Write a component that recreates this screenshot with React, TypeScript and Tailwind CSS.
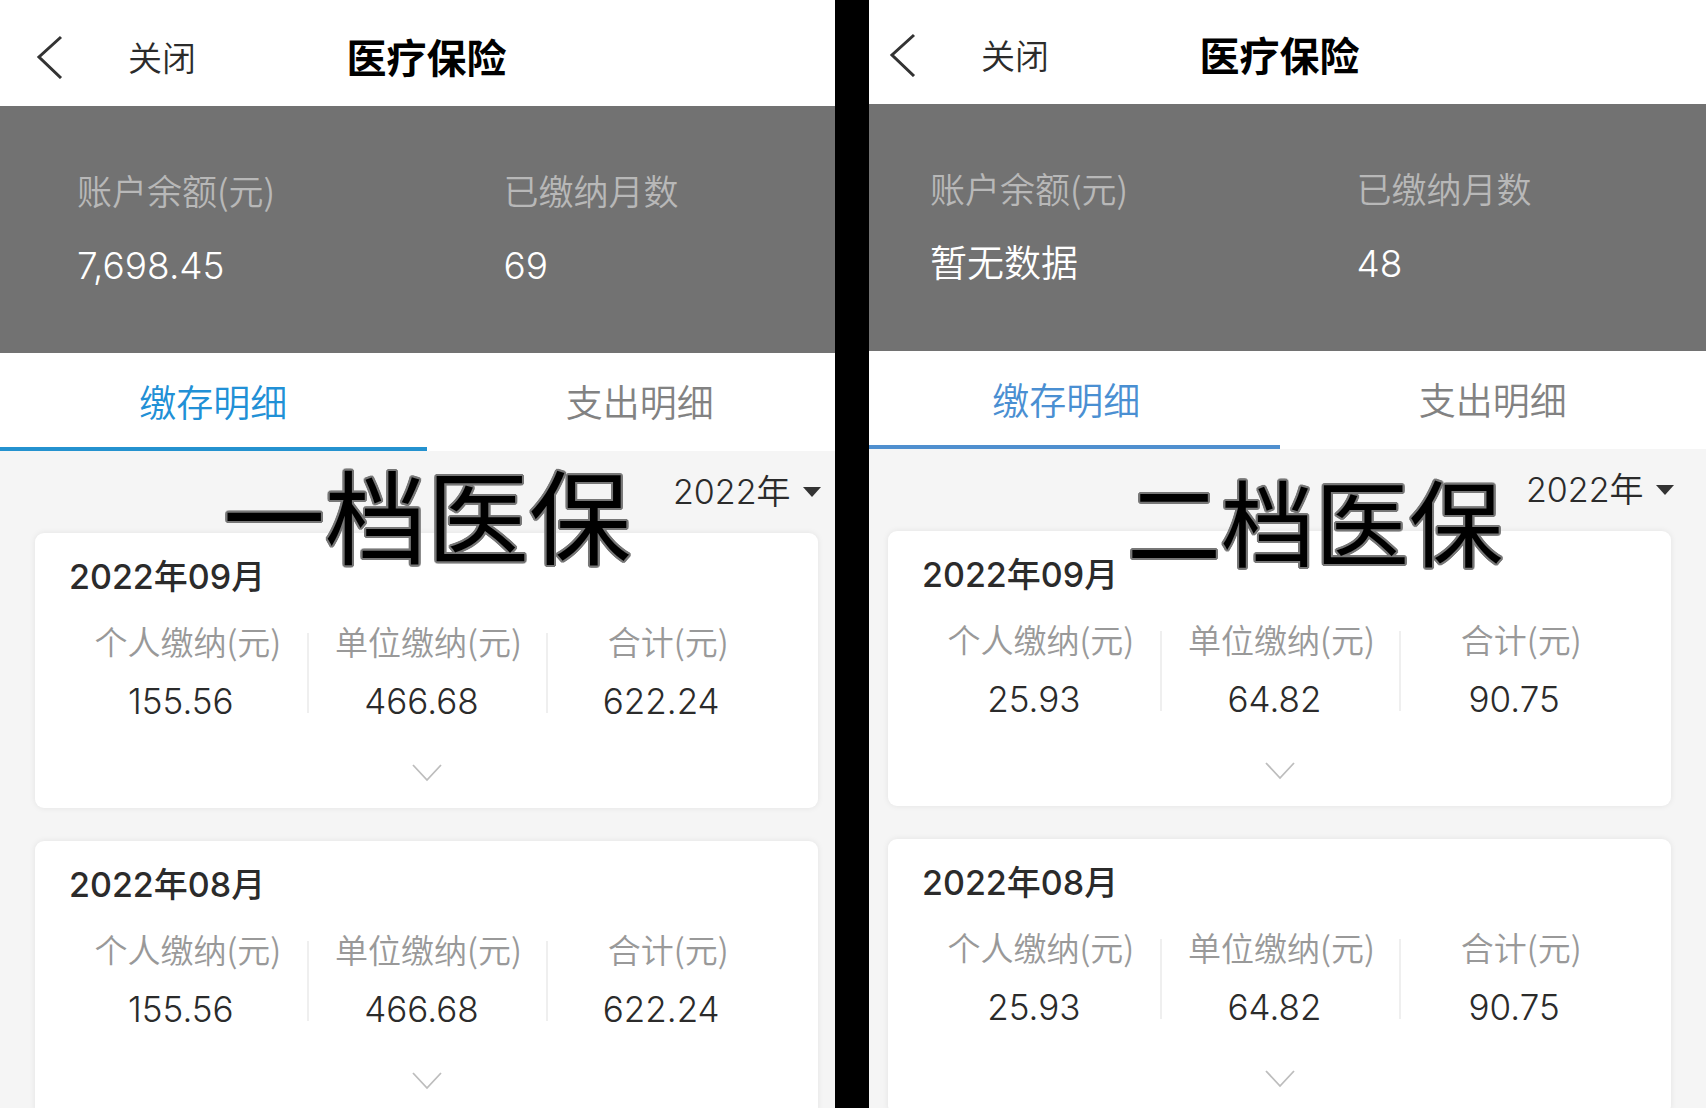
import React from 'react';

type Bill = { month: string; personal: string; company: string; total: string };

type Account = {
  id: string;
  balance: string;
  months: string;
  bills: Bill[];
  headerClass: string;
  activeTabClass: string;
  caption: string;
  captionClass: string;
};

const accounts: Account[] = [
  {
    id: 'first',
    balance: '7,698.45',
    months: '69',
    bills: [
      { month: '2022年09月', personal: '155.56', company: '466.68', total: '622.24' },
      { month: '2022年08月', personal: '155.56', company: '466.68', total: '622.24' },
    ],
    headerClass: 'h-[106px] pt-2',
    activeTabClass: 'border-[#2492cf] text-[#2190d6]',
    caption: '一档医保',
    captionClass: 'left-[223px] top-[469px] text-[102px]',
  },
  {
    id: 'second',
    balance: '暂无数据',
    months: '48',
    bills: [
      { month: '2022年09月', personal: '25.93', company: '64.82', total: '90.75' },
      { month: '2022年08月', personal: '25.93', company: '64.82', total: '90.75' },
    ],
    headerClass: 'h-[104px] pt-1.5',
    activeTabClass: 'border-[#4f8fcf] text-[#4a8fd2]',
    caption: '二档医保',
    captionClass: 'left-[274px] top-[479px] text-[94px]',
  },
];

function BackIcon() {
  return (
    <svg className="h-11 w-7" viewBox="0 0 28 44" fill="none" stroke="#333" strokeWidth="3" aria-hidden="true">
      <path d="M25 2 3 22l22 21" />
    </svg>
  );
}

function Figure({ label, value }: { label: string; value: string }) {
  return (
    <div className="flex h-20 flex-col items-center justify-between border-l-2 border-[#efefef] first:border-l-0">
      <dt className="-mt-3 pl-0.5 font-['Noto_Sans_CJK_SC',sans-serif] text-[33px] leading-10 font-[350] text-[#999]">
        {label}
      </dt>
      <dd className="pr-3 text-[35px] leading-6 font-[350] text-[#2b2b2b]">{value}</dd>
    </div>
  );
}

function BillCard({ bill }: { bill: Bill }) {
  return (
    <article className="rounded-[9px] bg-white px-8 pt-5 pb-[23px] shadow-[0_0_6px_rgba(0,0,0,0.08)]">
      <h2 className="pl-0.5 text-[34px] leading-[48px] font-medium text-[#2b2b2b]">{bill.month}</h2>
      <dl className="mt-8 grid grid-cols-3">
        <Figure label="个人缴纳(元)" value={bill.personal} />
        <Figure label="单位缴纳(元)" value={bill.company} />
        <Figure label="合计(元)" value={bill.total} />
      </dl>
      <button type="button" aria-label="展开" className="mx-auto mt-12 flex h-6 w-10 items-center justify-center">
        <svg className="h-[18px] w-8" viewBox="0 0 32 18" fill="none" stroke="#bdbdbd" strokeWidth="1.8" aria-hidden="true">
          <path d="M2 1l14 15L30 1" />
        </svg>
      </button>
    </article>
  );
}

function AccountScreen({ account }: { account: Account }) {
  const yearId = `year-${account.id}`;
  return (
    <section className="relative bg-[#f5f5f5]">
      <header className={`grid grid-cols-[1fr_auto_1fr] items-center bg-white ${account.headerClass}`}>
        <div className="flex items-center pl-9">
          <button type="button" aria-label="返回">
            <BackIcon />
          </button>
          <button type="button" className="ml-16 pt-1 text-[34px] leading-10 font-[350] text-[#2b2b2b]">
            关闭
          </button>
        </div>
        <h1 className="pt-1 text-[40px] leading-12 font-bold text-black">医疗保险</h1>
      </header>

      <dl className="grid h-[247px] grid-cols-2 items-center bg-[#727272] pb-1">
        <div className="pl-[77px]">
          <dt className="font-['Noto_Sans_CJK_SC',sans-serif] text-[35px] leading-[52px] font-[350] text-[#b8b8b8]">
            账户余额(元)
          </dt>
          <dd className="mt-6 text-[37px] leading-[52px] font-[350] text-white">{account.balance}</dd>
        </div>
        <div className="pl-[77px]">
          <dt className="font-['Noto_Sans_CJK_SC',sans-serif] text-[35px] leading-[52px] font-[350] text-[#b8b8b8]">
            已缴纳月数
          </dt>
          <dd className="mt-6 text-[37px] leading-[52px] font-[350] text-white">{account.months}</dd>
        </div>
      </dl>

      <div role="tablist" className="grid h-[98px] grid-cols-2 bg-white text-[37px] font-[350]">
        <button type="button" role="tab" aria-selected="true" className={`border-b-4 pt-2 ${account.activeTabClass}`}>
          缴存明细
        </button>
        <button type="button" role="tab" aria-selected="false" className="pt-1 text-[#828282]">
          支出明细
        </button>
      </div>

      <div className="flex h-[82px] items-center justify-end pr-8">
        <label htmlFor={yearId} className="sr-only">
          年份
        </label>
        <select
          id={yearId}
          className="appearance-none bg-transparent text-[34px] leading-12 font-[350] text-[#2b2b2b]"
          defaultValue="2022"
        >
          <option value="2022">2022年</option>
        </select>
        <svg className="ml-3 h-2.5 w-[18px]" viewBox="0 0 18 10" fill="#333" aria-hidden="true">
          <path d="M0 0h18L9 10z" />
        </svg>
      </div>

      <div className="flex flex-col gap-[33px] px-[35px]">
        {account.bills.map((bill) => (
          <BillCard key={bill.month} bill={bill} />
        ))}
      </div>

      <p
        className={`absolute leading-none font-normal whitespace-nowrap text-black [text-shadow:2px_0_#777,-2px_0_#777,0_2px_#777,0_-2px_#777,1px_2px_#777,-1px_2px_#777,1px_-2px_#777,-1px_-2px_#777,2px_1px_#777,-2px_1px_#777,2px_-1px_#777,-2px_-1px_#777] ${account.captionClass}`}
      >
        {account.caption}
      </p>
    </section>
  );
}

export default function App() {
  return (
    <main
      lang="zh-CN"
      className="relative grid h-screen grid-cols-2 overflow-hidden bg-[#f5f5f5] font-['Inter','Noto_Sans_CJK_SC',sans-serif]"
    >
      {accounts.map((account) => (
        <AccountScreen key={account.id} account={account} />
      ))}
      <div className="absolute inset-y-0 left-1/2 -ml-[18px] w-[34px] bg-black" />
    </main>
  );
}
